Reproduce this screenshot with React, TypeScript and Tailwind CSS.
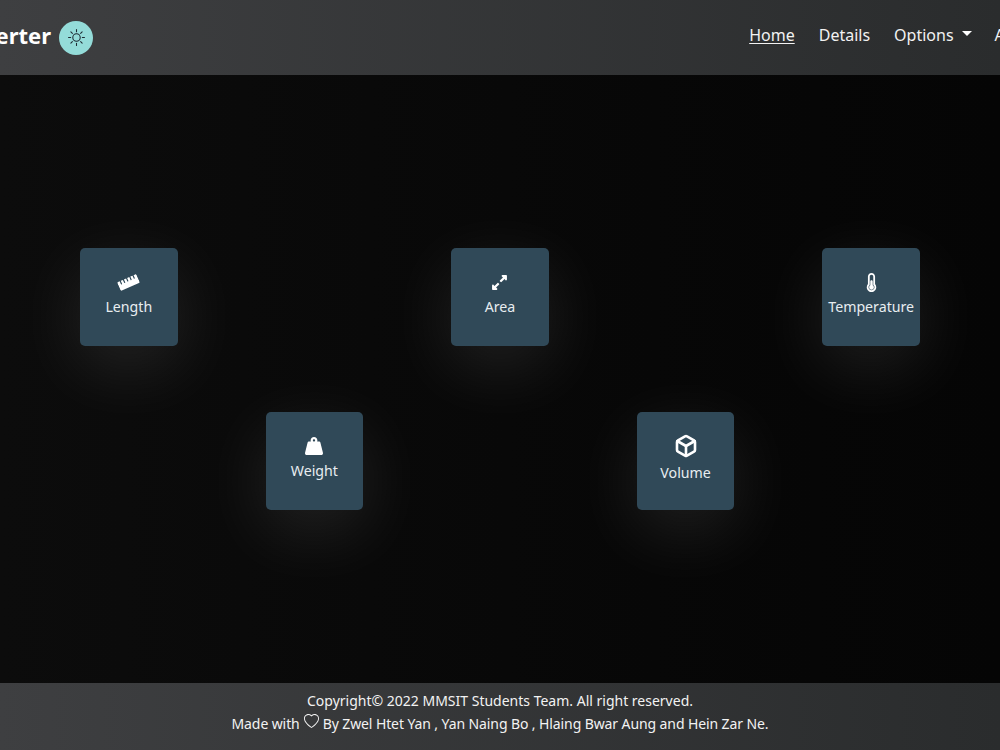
import { FaRulerHorizontal, FaExpandAlt, FaThermometerHalf, FaWeightHanging } from "react-icons/fa";
import { BsSun, BsHeart } from "react-icons/bs";
import { LuBox } from "react-icons/lu";
import type { ReactNode } from "react";

function Tile({ icon, label, col, top, box }: { icon: ReactNode; label: string; col: string; top: string; box: string }) {
  return (
    <a className={`${col} ${top} flex h-[98px] w-[97.5px] flex-col items-center rounded-[5px] bg-[#304958] text-white shadow-[0_20px_70px_rgba(255,255,255,0.11)]`}>
      <span className={`${box} flex items-center justify-center`}>{icon}</span>
      <span className="mt-[3px] text-[14.2px] leading-[24px] text-[#e8edf0]">{label}</span>
    </a>
  );
}

export default function App() {
  return (
    <div className="flex h-[750px] w-[1000px] flex-col overflow-hidden bg-[#0a0a0a] text-white [font-family:'Noto_Sans',sans-serif]">
      <header className="flex h-[75px] shrink-0 items-center justify-between bg-gradient-to-r from-[#3e3f41] to-[#2a2c2d]">
        <div className="ml-[-112px] flex items-center gap-[8px]">
          <span className="mb-[6px] whitespace-nowrap text-[22px] font-bold leading-none">Unit Converter</span>
          <span className="flex h-[34px] w-[34px] items-center justify-center rounded-full bg-[#94dcd9] text-[#1d2b33]">
            <BsSun size={17} />
          </span>
        </div>
        <nav className="mr-[-40px] mb-[6px] flex items-center gap-[24px] text-[16px] text-[#f2f2f2]">
          <a className="underline underline-offset-[2px]">Home</a>
          <a>Details</a>
          <a className="flex items-center gap-[8px]">
            Options
            <span className="mb-[3px] border-x-[5px] border-t-[5px] border-x-transparent border-t-white" />
          </a>
          <a className="-ml-px">About</a>
        </nav>
      </header>

      <main className="flex flex-1 items-center bg-gradient-to-r from-[#0c0c0c] to-[#050505]">
        <div className="grid w-full grid-cols-5 justify-items-center gap-y-[66px] px-[36px]">
          <Tile col="col-start-1" top="pt-[24px]" box="h-[20px]" label="Length" icon={<FaRulerHorizontal size={21} className="rotate-[-24deg]" />} />
          <Tile col="col-start-3" top="pt-[24px]" box="h-[20px]" label="Area" icon={<FaExpandAlt size={17} />} />
          <Tile col="col-start-5" top="pt-[24px]" box="h-[20px]" label="Temperature" icon={<FaThermometerHalf size={19} />} />
          <Tile col="col-start-2" top="pt-[24px]" box="h-[20px]" label="Weight" icon={<FaWeightHanging size={18} />} />
          <Tile col="col-start-4" top="pt-[22px]" box="h-[24px]" label="Volume" icon={<LuBox size={24} strokeWidth={2.6} />} />
        </div>
      </main>

      <footer className="flex h-[67px] shrink-0 flex-col items-center justify-center bg-gradient-to-r from-[#3e3f41] to-[#2a2c2d] pb-[10px] text-[14px] leading-[23px] text-[#f2f2f2]">
        <p>Copyright© 2022 MMSIT Students Team. All right reserved.</p>
        <p className="flex items-center gap-[4px] tracking-[-0.1px]">
          Made with <BsHeart size={15} className="mb-[3px]" /> By Zwel Htet Yan , Yan Naing Bo , Hlaing Bwar Aung and Hein Zar Ne.
        </p>
      </footer>
    </div>
  );
}
